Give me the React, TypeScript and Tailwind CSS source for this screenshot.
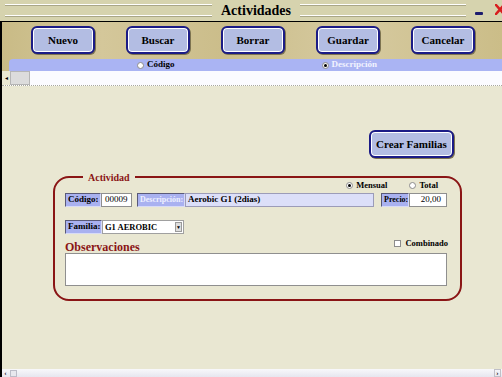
import React from 'react'

const serif = { fontFamily: '"Liberation Serif", "Times New Roman", serif' }

const toolbarButtons = ['Nuevo', 'Buscar', 'Borrar', 'Guardar', 'Cancelar']

function ToolButton({ label, className = '' }: { label: string; className?: string }) {
  return (
    <button
      className={`flex items-center justify-center rounded-[6px] border-2 border-[#1b1b86] bg-[#b3bde3] shadow-[inset_0_0_0_1px_#ffffff,1px_1px_0_#7d7350] font-bold text-black ${className}`}
    >
      {label}
    </button>
  )
}

function Radio({ checked, light }: { checked?: boolean; light?: boolean }) {
  return (
    <span
      className={`flex h-[7px] w-[7px] items-center justify-center rounded-full border border-[#8c8c8c] ${
        light ? 'bg-white' : 'bg-[#f4f4f4]'
      }`}
    >
      {checked && <span className="h-[3px] w-[3px] rounded-full bg-black" />}
    </span>
  )
}

function Label({ text, dim, w, size = 'text-[9px]' }: { text: string; dim?: boolean; w: string; size?: string }) {
  return (
    <div
      className={`flex h-full items-center overflow-hidden whitespace-nowrap border border-[#5a5a78] border-r-[#d8dbf6] border-b-[#d8dbf6] bg-[#a9b1f0] pl-[2px] font-bold ${size} ${w} ${
        dim ? 'text-[#eef0ff]' : 'text-black'
      }`}
    >
      {text}
    </div>
  )
}

function TitleLines({ w }: { w: string }) {
  return (
    <div className={`flex flex-col gap-[9px] ${w}`}>
      <div className="h-[2px] border-b border-[#a9a688] bg-white" />
      <div className="h-[2px] border-b border-[#a9a688] bg-white" />
    </div>
  )
}

export default function App() {
  return (
    <div
      className="flex h-[377px] w-[502px] flex-col overflow-hidden bg-[#e9e7d2]"
      style={serif}
    >
      {/* title bar */}
      <div className="relative flex h-[21px] shrink-0 items-center bg-[#d6d3ae] pl-[5px]">
        <TitleLines w="w-[207px]" />
        <div className="mx-[9px] text-[14px] font-bold text-black">Actividades</div>
        <TitleLines w="w-[166px]" />
        <div className="absolute right-[19px] top-[12px] h-[3px] w-[8px] rounded-[1px] bg-[#1c1c6e]" />
        <svg className="absolute right-[-3px] top-[4px]" width="10" height="11" viewBox="0 0 10 11">
          <path d="M1 1 L9 10 M9 1 L1 10" stroke="#d81e1e" strokeWidth="2.6" strokeLinecap="round" />
        </svg>
      </div>

      {/* left frame + body */}
      <div className="flex flex-1 flex-col border-l-[2px] border-t border-black bg-[linear-gradient(90deg,#c9bb86_0%,#d4c79a_20%,#cbbd8a_45%,#d6caa0_70%,#cbbd88_100%)]">
        {/* toolbar */}
        <div className="flex h-[37px] shrink-0 items-start pt-[4px]">
          {toolbarButtons.map((b, i) => (
            <ToolButton
              key={b}
              label={b}
              className={`h-[28px] w-[64px] text-[11px] ${i === 0 ? 'ml-[29px]' : 'ml-[31px]'}`}
            />
          ))}
        </div>

        {/* search mode strip */}
        <div className="ml-[7px] flex h-[12px] shrink-0 items-center rounded-tl-[4px] bg-[#aab4f3] pl-[6px]">
          <div className="ml-[122px] flex items-center gap-[3px]">
            <Radio light />
            <span className="text-[9px] font-bold text-black">Código</span>
          </div>
          <div className="ml-[147px] flex items-center gap-[3px]">
            <Radio checked />
            <span className="text-[9px] font-bold text-[#f2f3ff]">Descripción</span>
          </div>
        </div>

        {/* search input row */}
        <div className="flex h-[15px] shrink-0 items-stretch border-b border-dotted border-[#a8a8a0] bg-white">
          <div className="flex w-[8px] items-center justify-center bg-[#e9e7d2] text-[6px] leading-none text-black">
            ◂
          </div>
          <div className="w-[20px] border border-[#b5b5b5] bg-[#dcdcdc]" />
          <div className="flex-1 bg-[#fbfbff]" />
        </div>

        {/* main area */}
        <div className="flex flex-1 flex-col bg-[#e9e7d2]">
          <div className="flex justify-end pr-[48px] pt-[44px]">
            <ToolButton label="Crear Familias" className="h-[28px] w-[85px] text-[11px]" />
          </div>

          <div className="relative ml-[51px] mt-[18px] h-[125px] w-[409px] rounded-[16px] border-2 border-[#8a1515] pl-[10px] pr-[12px]">
            <span className="absolute left-[28px] top-[-8px] bg-[#e9e7d2] px-[5px] text-[10px] font-bold text-[#8a1515]">
              Actividad
            </span>

            <div className="mt-[2px] flex h-[10px] items-center justify-end pr-[10px] text-[8.5px] font-bold">
              <div className="flex items-center gap-[3px]">
                <Radio checked light />
                <span>Mensual</span>
              </div>
              <div className="ml-[22px] flex items-center gap-[3px]">
                <Radio light />
                <span>Total</span>
              </div>
            </div>

            <div className="mt-[3px] flex h-[14px] items-stretch">
              <Label text="Código:" w="w-[36px]" />
              <div className="flex w-[31px] items-center border border-[#8f8f8f] bg-white pl-[3px] text-[9px]">
                00009
              </div>
              <div className="ml-[5px] flex">
                <Label text="Descripción:" dim w="w-[48px]" size="text-[8px]" />
              </div>
              <div className="flex w-[189px] items-center border border-[#9c9cb8] bg-[#dcdff9] pl-[2px] text-[9px] font-bold">
                Aerobic G1 (2dias)
              </div>
              <div className="ml-[7px] flex">
                <Label text="Precio:" w="w-[28px]" size="text-[8px]" />
              </div>
              <div className="flex w-[38px] items-center justify-end border border-[#8f8f8f] bg-white pr-[5px] text-[9px]">
                20,00
              </div>
            </div>

            <div className="mt-[13px] flex h-[14px] items-stretch">
              <Label text="Familia:" w="w-[37px]" />
              <div className="flex w-[82px] items-center justify-between border border-[#a0a0a0] bg-white pl-[2px] pr-[1px] text-[8.5px] font-bold">
                <span>G1 AEROBIC</span>
                <span className="flex h-[10px] w-[7px] items-center justify-center border border-[#9a9a9a] bg-[#dedede] text-[5px] leading-none">
                  ▼
                </span>
              </div>
            </div>

            <div className="mt-[3px] flex h-[16px] items-stretch justify-between">
              <span className="self-end text-[12px] font-bold leading-[12px] text-[#8a1515]">
                Observaciones
              </span>
              <div className="flex items-start gap-[4px] pt-[2px] text-[8.5px] font-bold">
                <span className="mt-[1px] h-[7px] w-[7px] border border-[#8c8c8c] bg-white" />
                <span className="leading-[9px]">Combinado</span>
              </div>
            </div>

            <div className="h-[33px] w-[382px] border border-[#8f8f8f] bg-white" />
          </div>

          <div className="flex-1" />

          {/* bottom scrollbar */}
          <div className="flex h-[8px] items-center justify-between bg-[linear-gradient(#f8f8fb,#e6e6ef)]">
            <div className="flex items-center gap-[1px]">
              <span className="flex h-[8px] w-[7px] items-center justify-center text-[7px] font-bold leading-none">‹</span>
              <span className="h-[7px] w-[7px] border border-[#bcbcc8] bg-[#e8e8ee]" />
            </div>
            <span className="mr-[1px] flex h-[8px] w-[7px] items-center justify-center border border-[#c0c0c8] text-[7px] font-bold leading-none">›</span>
          </div>
        </div>
      </div>
    </div>
  )
}
